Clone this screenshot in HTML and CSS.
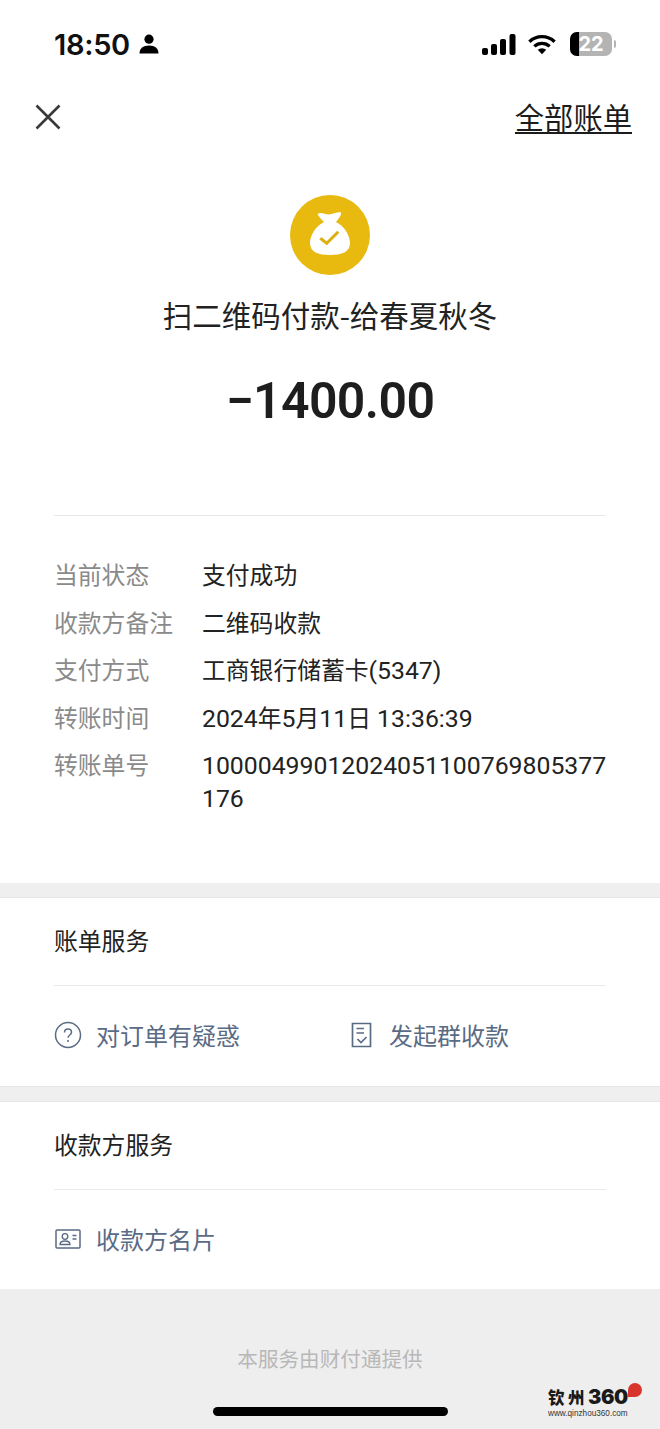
FILE: index.html
```html
<!DOCTYPE html>
<html lang="zh-CN">
<head>
    <meta charset="UTF-8">
    <meta name="viewport" content="width=device-width, initial-scale=1.0">
    <title>账单详情</title>
    <link rel="stylesheet" href="styles.css">
</head>
<body>
    <div class="page">
        <div class="top">
            <div class="status-bar">
                <div class="status-left">
                    <span class="time">18:50</span>
                    <svg class="person" viewBox="0 0 20 20"><circle cx="10" cy="5.2" r="4.6"/><path d="M0.5 19.5c0-5.2 3.6-8 9.5-8s9.500 2.800 9.500 8z"/></svg>
                </div>
                <div class="status-right">
                    <svg class="signal" viewBox="0 0 34 21"><rect x="0" y="14" width="6" height="7" rx="2"/><rect x="9" y="10" width="6" height="11" rx="2"/><rect x="18" y="5" width="6" height="16" rx="2"/><rect x="27.500" y="0" width="6" height="21" rx="2"/></svg>
                    <svg class="wifi" viewBox="0 0 30 21"><path d="M1.500 7.500a19.500 19.500 0 0 1 27 0" fill="none" stroke="#000" stroke-width="3.600"/><path d="M6.800 12.500a12 12 0 0 1 16.400 0" fill="none" stroke="#000" stroke-width="3.600"/><path d="M10.500 16.200a6.500 6.500 0 0 1 9 0L15 21z"/></svg>
                    <div class="battery">
                        <div class="battery-fill"></div>
                        <span class="battery-num">22</span>
                    </div>
                    <div class="battery-cap"></div>
                </div>
            </div>

            <div class="nav">
                <svg class="close" viewBox="0 0 26 26"><path d="M1.500 1.500l23 23M24.500 1.500l-23 23" fill="none" stroke="#3a3a3a" stroke-width="2.600"/></svg>
                <a class="all-bills">全部账单</a>
            </div>

            <div class="summary">
                <div class="bag-icon">
                    <svg viewBox="0 0 80 80"><path d="M28.500 18.500c3-1.500 6 .5 10 1 4 .3 9-3 12.500-2 .8 2.500-3 7-5 9.500 8 4 14 13 14 21 0 9-8 12-20 12s-20-3-20-12c0-8 6-17 14-21-2-2-5.500-5-6.500-8.500z" fill="#fff"/><path d="M30.300 43.300l6.400 5 11.600-11.600" fill="none" stroke="#dcb012" stroke-width="3"/></svg>
                </div>
                <div class="summary-title">扫二维码付款-给春夏秋冬</div>
                <div class="amount">−1400.00</div>
            </div>

            <div class="details">
                <div class="detail-row"><span class="detail-label">当前状态</span><span class="detail-value">支付成功</span></div>
                <div class="detail-row"><span class="detail-label">收款方备注</span><span class="detail-value">二维码收款</span></div>
                <div class="detail-row"><span class="detail-label">支付方式</span><span class="detail-value">工商银行储蓄卡<span class="num">(5347)</span></span></div>
                <div class="detail-row"><span class="detail-label">转账时间</span><span class="detail-value"><span class="num">2024</span>年<span class="num">5</span>月<span class="num">11</span>日<span class="num"> 13:36:39</span></span></div>
                <div class="detail-row"><span class="detail-label">转账单号</span><span class="detail-value"><span class="num">10000499012024051100769805377<br>176</span></span></div>
            </div>
        </div>

        <div class="section section-bill">
            <div class="section-title">账单服务</div>
            <div class="section-links">
                <div class="link link-half">
                    <svg class="link-icon" viewBox="0 0 28 28"><circle cx="14" cy="14" r="12.500" fill="none" stroke="#5a6b85" stroke-width="1.500"/><path d="M10.500 11.500c0-2.200 1.500-3.500 3.500-3.500s3.500 1.300 3.500 3.200c0 2.800-3.500 2.800-3.500 5.600" fill="none" stroke="#5a6b85" stroke-width="1.500"/><circle cx="14" cy="20" r="1" fill="#5a6b85"/></svg>
                    <span>对订单有疑惑</span>
                </div>
                <div class="link">
                    <svg class="link-icon" viewBox="0 0 28 28"><path d="M5.500 2.500h18v23h-18zM9.500 7.500h7.500M9.500 12h7.500M10.500 18l3.500 3.500 5.500-5.500" fill="none" stroke="#5a6b85" stroke-width="1.700"/></svg>
                    <span>发起群收款</span>
                </div>
            </div>
        </div>

        <div class="section section-payee">
            <div class="section-title">收款方服务</div>
            <div class="section-links">
                <div class="link">
                    <svg class="link-icon" viewBox="0 0 28 28"><rect x="2" y="5" width="24" height="18" rx="1" fill="none" stroke="#5a6b85" stroke-width="1.500"/><circle cx="11" cy="11.500" r="2.800" fill="none" stroke="#5a6b85" stroke-width="1.300"/><path d="M6 19.500c0-2.500 2-3.500 5-3.500s5 1 5 3.500zM18.500 10.500h4M18.500 14h4" fill="none" stroke="#5a6b85" stroke-width="1.300"/></svg>
                    <span>收款方名片</span>
                </div>
            </div>
        </div>

        <div class="footer">本服务由财付通提供</div>
    </div>

    <div class="home-bar"></div>
    <div class="watermark">
        <div class="wm-name">钦州<span class="wm-digits">360</span></div>
        <div class="wm-url">www.qinzhou360.com</div>
        <div class="wm-dot"></div>
    </div>
</body>
</html>
```

FILE: styles.css
```css
html, body {
    margin: 0;
    padding: 0;
    background-color: #efefef;
}
body {
    font-family: "Noto Sans CJK SC", "Liberation Sans", sans-serif;
    color: #1c1c1c;
    overflow: hidden;
}
.page {
    position: relative;
    width: 660px;
    height: 1429px;
    display: flex;
    flex-direction: column;
}
.top {
    flex: none;
    background-color: #fff;
}
.status-bar {
    height: 88px;
    display: flex;
    justify-content: space-between;
    align-items: center;
    padding: 0 44px 0 54px;
    box-sizing: border-box;
}
.status-left {
    display: flex;
    align-items: center;
    gap: 9px;
}
.time {
    font-family: Inter, "Liberation Sans", sans-serif;
    font-size: 29px;
    font-weight: 600;
    color: #111;
    letter-spacing: -0.3px;
}
.person {
    width: 20px;
    height: 20px;
}
.status-right {
    display: flex;
    align-items: center;
}
.signal {
    width: 34px;
    height: 21px;
    margin-right: 12px;
}
.wifi {
    width: 28px;
    height: 21px;
    margin-right: 14px;
}
.battery {
    position: relative;
    width: 42px;
    height: 24px;
    border-radius: 7px;
    background-color: #b4b4b4;
    overflow: hidden;
    text-align: center;
}
.battery-fill {
    position: absolute;
    left: 0;
    top: 0;
    bottom: 0;
    width: 9px;
    background-color: #000;
}
.battery-num {
    position: relative;
    font-family: Inter, "Liberation Sans", sans-serif;
    font-size: 20px;
    font-weight: 700;
    line-height: 24px;
    color: #fff;
    display: block;
}
.battery-cap {
    width: 2px;
    height: 8px;
    margin-left: 2px;
    border-radius: 0 2px 2px 0;
    background-color: #b4b4b4;
}
.nav {
    height: 58px;
    display: flex;
    justify-content: space-between;
    align-items: center;
    padding: 0 28px 0 35px;
}
.close {
    width: 26px;
    height: 26px;
}
.all-bills {
    font-size: 29.300px;
    line-height: 32px;
    color: #1c1c1c;
    border-bottom: 2px solid #1c1c1c;
}
.summary {
    height: 370px;
    margin: 0 54px;
    padding-top: 49px;
    box-sizing: border-box;
    border-bottom: 1px solid #e9e9e9;
    display: flex;
    flex-direction: column;
    align-items: center;
}
.bag-icon {
    width: 80px;
    height: 80px;
    border-radius: 50%;
    background-color: #e8b90e;
}
.bag-icon svg {
    display: block;
    width: 80px;
    height: 80px;
}
.summary-title {
    margin-top: 18px;
    font-size: 29.500px;
    line-height: 42px;
    color: #222;
}
.amount {
    margin-top: 37px;
    font-family: Roboto, "Liberation Sans", sans-serif;
    font-size: 50px;
    font-weight: 600;
    letter-spacing: -0.6px;
    line-height: 58px;
    color: #1e1e1e;
}
.details {
    height: 367px;
    padding: 41px 54px 0;
    box-sizing: border-box;
    font-size: 23.800px;
    line-height: 33px;
}
.detail-row {
    display: flex;
    margin-bottom: 14.500px;
}
.detail-label {
    width: 148px;
    flex: none;
    color: #8a8a8a;
}
.detail-value {
    font-size: 23.800px;
    color: #222;
    white-space: nowrap;
}
.num {
    font-family: Roboto, "Liberation Sans", sans-serif;
    font-size: 24.800px;
    line-height: 1;
}
.section {
    flex: none;
    box-sizing: border-box;
    padding: 0 54px;
    border-top: 1px solid #e6e6e6;
    border-bottom: 1px solid #e6e6e6;
    background-color: #fff;
}
.section-bill {
    margin-top: 14px;
    height: 190px;
}
.section-payee {
    margin-top: 14px;
    height: 188px;
    border-bottom: none;
}
.section-title {
    height: 88px;
    box-sizing: border-box;
    padding-top: 25px;
    font-size: 23.800px;
    line-height: 34px;
    color: #222;
    border-bottom: 1px solid #e9e9e9;
}
.section-links {
    display: flex;
    padding-top: 32px;
}
.link {
    display: flex;
    align-items: center;
    gap: 14px;
    font-size: 24px;
    line-height: 34px;
    color: #5a6b85;
}
.link-half {
    width: 293px;
}
.link-icon {
    width: 28px;
    height: 28px;
    flex: none;
}
.footer {
    flex: 1;
    background-color: #eeeeee;
    text-align: center;
    font-size: 20.600px;
    line-height: 30px;
    padding-top: 54px;
    color: #b8b8b8;
}
.home-bar {
    position: absolute;
    left: 213px;
    top: 1407px;
    width: 235px;
    height: 9px;
    border-radius: 5px;
    background-color: #000;
}
.watermark {
    position: absolute;
    left: 548px;
    top: 1387px;
    width: 96px;
}
.wm-name {
    height: 22px;
    font-size: 16.500px;
    font-weight: 900;
    letter-spacing: 3.500px;
    line-height: 21px;
    color: #1a1a1a;
    white-space: nowrap;
}
.wm-digits {
    font-family: Inter, "Liberation Sans", sans-serif;
    font-size: 20px;
    font-weight: 900;
    letter-spacing: -0.5px;
}
.wm-url {
    font-family: "Liberation Sans", sans-serif;
    font-size: 8.200px;
    line-height: 9px;
    color: #333;
    white-space: nowrap;
}
.wm-dot {
    position: absolute;
    left: 80px;
    top: -4px;
    width: 14px;
    height: 14px;
    border-radius: 50% 50% 50% 0;
    background-color: #d8352c;
}
```
